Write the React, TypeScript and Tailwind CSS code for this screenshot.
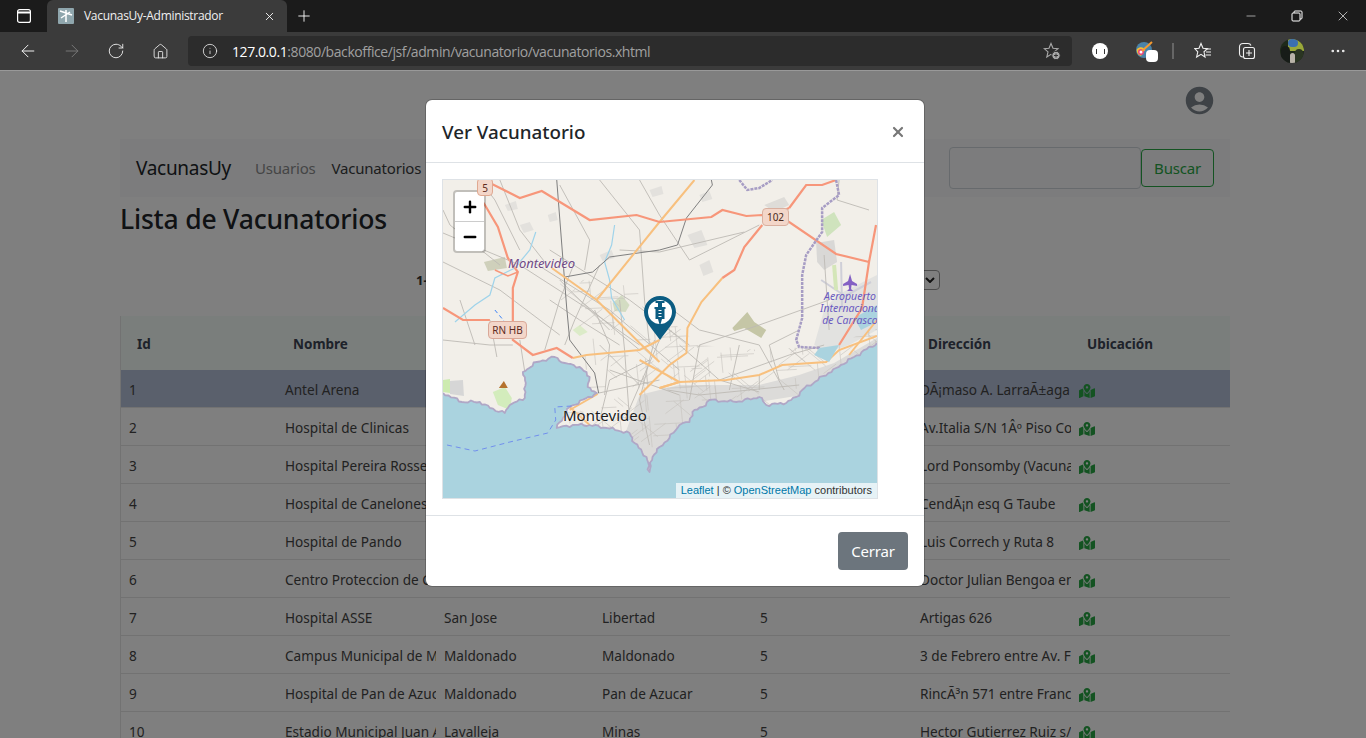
import React from "react";
import { FaMapMarkedAlt } from "react-icons/fa";
import { MdAccountCircle } from "react-icons/md";
import { ArrowLeft, ArrowRight, RotateCw, Home, Info, Plus, X, Minus, MoreHorizontal } from "lucide-react";

const rows = [
  ["1", "Antel Arena", "Montevideo", "Montevideo", "5", "DÃ¡maso A. LarraÃ±aga"],
  ["2", "Hospital de Clinicas", "Montevideo", "Montevideo", "5", "Av.Italia S/N 1Âº Piso Costado"],
  ["3", "Hospital Pereira Rossell", "Montevideo", "Montevideo", "5", "Lord Ponsomby (Vacunatorio)"],
  ["4", "Hospital de Canelones", "Canelones", "Canelones", "5", "CendÃ¡n esq G Taube"],
  ["5", "Hospital de Pando", "Canelones", "Pando", "5", "Luis Correch y Ruta 8"],
  ["6", "Centro Proteccion de Choferes", "Montevideo", "Montevideo", "5", "Doctor Julian Bengoa entre"],
  ["7", "Hospital ASSE", "San Jose", "Libertad", "5", "Artigas 626"],
  ["8", "Campus Municipal de Maldonado", "Maldonado", "Maldonado", "5", "3 de Febrero entre Av. Franklin"],
  ["9", "Hospital de Pan de Azucar", "Maldonado", "Pan de Azucar", "5", "RincÃ³n 571 entre Francisco"],
  ["10", "Estadio Municipal Juan Antonio", "Lavalleja", "Minas", "5", "Hector Gutierrez Ruiz s/n"],
];

const grayRoads = [
  "M443 233L520 265L590 310L640 345", "M443 262L500 290L560 335", "M530 260L610 310L680 370", "M550 250L630 300L690 345",
  "M500 180L520 230L545 262", "M600 180L640 230L645 300L650 345", "M640 180L660 215L690 260", "M443 340L490 345L513 345",
  "M460 300L475 345", "M490 320L497 357", "M520 340L525 372", "M545 350L560 300L575 262", "M595 310L610 345L605 395",
  "M620 300L625 350L630 420", "M655 340L640 400L650 445", "M680 345L720 380L760 392", "M660 300L700 330L760 345L785 390",
  "M690 260L760 225", "M660 252L745 232", "M700 345L760 325L830 300", "M620 250L660 252", "M720 380L790 355L825 345",
  "M668 390L700 395L800 385", "M610 370L680 395", "M590 395L660 380", "M600 345L640 385", "M580 300L640 350", "M660 340L625 420",
  "M600 420L610 380L650 360", "M700 345L690 400", "M730 390L740 345", "M780 380L770 345L800 330", "M760 390L760 375",
  "M840 180L838 200L870 210", "M825 255L830 330", "M600 265L575 320L565 345", "M550 300L580 320L620 345", "M560 280L610 330",
  "M443 210L450 225L500 265", "M560 185L590 240L585 270", "M480 180L495 200L520 250",
];

const coastPts: [number, number][] = [
  [443, 393], [462, 402], [480, 402], [490, 408], [505, 413], [510, 405], [525, 398], [526, 383], [523, 372], [537, 362], [555, 357],
  [565, 363], [580, 367], [590, 377], [588, 387], [597, 393], [570, 407], [557, 428], [573, 425], [590, 425], [607, 428], [630, 433],
  [635, 443], [647, 457], [650, 472], [653, 457], [660, 447], [670, 438], [680, 425], [690, 422], [693, 412], [703, 407], [710, 400],
  [737, 402], [760, 397], [767, 405], [787, 403], [797, 397], [803, 390], [837, 368], [878, 343],
];

function bumpy(pts: [number, number][], amp: number) {
  let d = `M${pts[0][0]} ${pts[0][1]}`;
  let n = 0;
  for (let s = 1; s < pts.length; s++) {
    const [x0, y0] = pts[s - 1];
    const [x1, y1] = pts[s];
    const len = Math.hypot(x1 - x0, y1 - y0);
    const steps = Math.max(1, Math.round(len / 3));
    for (let i = 1; i <= steps; i++) {
      n += 1;
      const t = i / steps;
      const a = i === steps ? 0 : amp * Math.sin(n * 1.7) * Math.cos(n * 0.63);
      const px = x0 + (x1 - x0) * t - ((y1 - y0) / len) * a;
      const py = y0 + (y1 - y0) * t + ((x1 - x0) / len) * a;
      d += `L${px.toFixed(1)} ${py.toFixed(1)}`;
    }
  }
  return d;
}

const coastLine = bumpy(coastPts, 1.6);

function hash(n: number) {
  const v = Math.sin(n * 12.9898) * 43758.5453;
  return v - Math.floor(v);
}

const angles: [number, number][] = [[0.77, 0.64], [0.8, -0.6], [0.1, 1], [1, -0.05]];
const cityStreets: string[] = [];
for (let i = 0; i < 300; i++) {
  const x = 555 + hash(i) * 323;
  const y = 280 + hash(i + 1000) * 170;
  const [dx, dy] = angles[Math.floor(hash(i + 2000) * 4)];
  const len = 8 + hash(i + 3000) * 26;
  cityStreets.push(`M${x.toFixed(1)} ${y.toFixed(1)}L${(x + dx * len).toFixed(1)} ${(y + dy * len).toFixed(1)}`);
}

function MapArt() {
  return (
    <svg viewBox="443 180 435 318" className="block w-full h-full" preserveAspectRatio="none">
      <defs>
        <clipPath id="city">
          <path d="M548 278L625 282L700 345L760 350L840 345L878 325L878 450L640 480L560 430L585 340Z" />
        </clipPath>
      </defs>
      <rect x="443" y="180" width="435" height="318" fill="#f2efe9" />
      {/* urban fill */}
      <path d="M640 395L680 385L760 385L800 375L835 363L878 338L878 350L803 395L760 402L710 405L680 430L650 475L625 435Z" fill="#dcdbd9" />
      {/* patches */}
      <path d="M484 262L505 257L507 268L488 271Z" fill="#cfd0bb" />
      <path d="M733 328L748 312L755 322L767 330L762 338L745 328L735 331Z" fill="#c5c6a6" />
      <path d="M613 303L622 295L630 305L626 312L615 311Z" fill="#d3dcc2" />
      <path d="M573 330L580 325L588 332L580 336Z" fill="#dcebc8" />
      <path d="M493 392L505 387L512 398L510 410L498 405Z" fill="#d3ecbc" />
      <path d="M450 381L463 380L464 396L450 394Z" fill="#d6d6d6" />
      <path d="M443 380L450 379L450 393L443 392Z" fill="#cdebb0" />
      <path d="M822 220L835 212L842 225L828 237Z" fill="#cfe3bd" />
      <path d="M688 235L702 230L708 245L695 248Z" fill="#e2e0dc" />
      <path d="M700 265L710 260L714 272L704 276Z" fill="#e2e0dc" />
      <path d="M765 205L785 197L790 205L775 212Z" fill="#dedcd8" />
      <path d="M817 243L835 240L838 262L825 270L818 262Z" fill="#d9d8d6" />
      <path d="M838 295L878 275L878 330L850 345L830 352L815 345L825 310Z" fill="#e2e2e0" />
      <path d="M855 318L878 305L878 322L862 330Z" fill="#aad3df" />
      <path d="M520 225L530 222L534 230L524 233Z M548 215L556 212L558 220L550 222Z M600 255L612 250L615 258L603 261Z M700 195L710 191L713 199L703 202Z M505 205L516 201L518 209L508 211Z M650 190L662 186L664 194L653 197Z" fill="#e3e1dd" />
      {/* airport */}
      <path d="M846 296L872 282M822 280L846 296M842 262L843 310" stroke="#cfcfd8" strokeWidth="2" fill="none" />
      <path d="M835 265L837 290" stroke="#d4e6b8" strokeWidth="4" fill="none" />
      <g clipPath="url(#city)">
        {cityStreets.map((d, i) => (
          <path key={i} d={d} stroke="#c6c3bd" strokeWidth="0.6" fill="none" />
        ))}
      </g>
      {grayRoads.map((d, i) => (
        <path key={i} d={d} stroke="#bdbab4" strokeWidth="0.9" fill="none" />
      ))}
      {/* streams */}
      <path d="M536 232L530 250L515 268L495 278L490 295L475 305L455 322M615 225L612 245L605 262L610 280L612 298L625 320" stroke="#9fd3ea" strokeWidth="1.2" fill="none" />
      <path d="M495 310L505 322L520 330" stroke="#3b82f6" strokeWidth="1" strokeDasharray="4 3" fill="none" />
      {/* rails */}
      <path d="M557 180L567 308L570 340L595 373L599 393" stroke="#7d7d7d" strokeWidth="1" fill="none" />
      <path d="M565 277L593 272L610 257L660 250L678 245L687 218L713 185L712 180" stroke="#808080" strokeWidth="1" fill="none" />
      {/* orange roads */}
      <g stroke="#f8c07e" strokeWidth="2" fill="none">
        <path d="M695 180L660 222L597 300M552 268L597 300L640 343L660 362" />
        <path d="M573 358L587 355L640 350L660 340" />
        <path d="M660 388L680 382L727 380L760 375L783 365L827 362L840 350L878 336" />
        <path d="M723 278L702 302L688 328L687 353L670 365L640 395" />
        <path d="M660 388L680 382L640 360" />
        <path d="M590 425L570 407M570 410L598 394" />
        <path d="M850 355L878 320" />
      </g>
      {/* trunk */}
      <g stroke="#f7967a" strokeWidth="2.2" fill="none">
        <path d="M484 180L520 198L542 191L590 220L637 215L660 222L712 217L723 210L747 216L763 215L790 222L837 254L870 262L877 225" />
        <path d="M870 262L863 308L840 345" />
        <path d="M763 225L745 247L735 270L723 278" />
        <path d="M790 208L807 185L823 185L837 180" />
        <path d="M771 216L790 208" />
        <path d="M478 195L485 205L498 227L508 258L518 272L513 288L513 322L513 340L533 355L557 348L573 358" />
        <path d="M443 308L463 320L490 320" />
        <path d="M518 272L508 276L495 270" strokeWidth="1.5" />
      </g>
      {/* admin boundary */}
      <path d="M740 180L748 190L760 188L773 180M837 180L840 195L823 208L823 232L807 255L803 275L803 318L797 340L800 347L820 348L830 360" stroke="#a79dc4" strokeWidth="2.5" fill="none" strokeDasharray="3 1" />
      {/* water */}
      <path d={`${coastLine}L878 498L443 498Z`} fill="#aad3df" />
      <path d={coastLine} fill="none" stroke="#b0a7c6" strokeWidth="1.8" strokeLinejoin="round" />
      <path d="M820 348L840 345L830 362L815 355Z" fill="#aad3df" />
      <path d="M447 445L475 451L510 442L548 433L556 420L555 407L572 406" stroke="#6a87ee" strokeWidth="0.9" strokeDasharray="5 4" fill="none" />
      {/* peak */}
      <path d="M504 381L508 388L499 388Z" fill="#b5722e" />
      {/* plane */}
      <path d="M851 274L853 281L858 284L858 286L852.5 285L852 289L854 291L848 291L850 289L849.5 285L844 286L844 284L849 281Z" fill="#8461c4" />
    </svg>
  );
}

function Pin() {
  return (
    <svg viewBox="0 0 32 44" className="w-8 h-11">
      <path d="M16 0C7 0 0 7 0 16C0 26 11 36 16 44C21 36 32 26 32 16C32 7 25 0 16 0Z" fill="#0b5c82" />
      <circle cx="16" cy="16" r="12" fill="#fff" />
      <path d="M11.5 5H20.5V7H18V11H21.5V13H20.5V23H18L16.6 28H15.4L14 23H11.5V13H10.5V11H14V7H11.5Z" fill="#0b5c82" />
      <path d="M14.5 14.5H17.5M14.5 17.5H17.5M14.5 20.5H17.5" stroke="#fff" strokeWidth="1.2" />
    </svg>
  );
}

const tableCols = "grid-cols-[156px_159px_158px_158px_160px_159px_1fr]";

export default function App() {
  return (
    <div className="w-[1366px] h-[738px] overflow-hidden flex flex-col font-['Noto_Sans','Open_Sans',sans-serif] bg-white">
      {/* Browser tab strip */}
      <div className="h-8 bg-[#1b1b1b] flex items-end shrink-0 text-white">
        <div className="w-[47px] h-8 flex items-center justify-center">
          <svg width="16" height="16" viewBox="0 0 16 16" fill="none" stroke="#fff" strokeWidth="1.2"><rect x="1.6" y="1.6" width="12.8" height="12.8" rx="2" /><path d="M1.6 4.5H14.4" strokeWidth="2" /></svg>
        </div>
        <div className="w-[240px] h-[32px] bg-[#3b3b3b] rounded-t-md flex items-center pl-[11px] pr-[11px]">
          <svg width="16" height="16" viewBox="0 0 16 16" className="mr-[10px] shrink-0"><rect width="16" height="16" rx="1" fill="#8fa6ad" /><path d="M2 3L14 7M8 2V14M3 10L12 4" stroke="#fff" strokeWidth="1.5" /></svg>
          <span className="text-[12px] text-[#f0f0f0] font-['Open_Sans',sans-serif] whitespace-nowrap flex-1 tracking-[-0.3px]">VacunasUy-Administrador</span>
          <X size={13} strokeWidth={1.6} />
        </div>
        <div className="w-[34px] h-8 flex items-center justify-center"><Plus size={18} strokeWidth={1.2} /></div>
        <div className="flex-1" />
        <div className="w-[46px] h-8 flex items-center justify-center"><Minus size={14} strokeWidth={1} /></div>
        <div className="w-[46px] h-8 flex items-center justify-center">
          <svg width="12" height="12" viewBox="0 0 12 12" fill="none" stroke="#fff" strokeWidth="1"><rect x="1" y="3" width="8" height="8" rx="1" /><path d="M3 3V2a1 1 0 0 1 1-1h6a1 1 0 0 1 1 1v6a1 1 0 0 1-1 1H9" /></svg>
        </div>
        <div className="w-[46px] h-8 flex items-center justify-center"><X size={16} strokeWidth={1} /></div>
      </div>
      {/* Browser toolbar */}
      <div className="h-[38px] bg-[#3b3b3b] flex items-center shrink-0 text-[#f0f0f0] relative">
        <div className="w-11 flex justify-center pl-[11px]"><ArrowLeft size={20} strokeWidth={1.2} /></div>
        <div className="w-11 flex justify-center pl-[12px] text-[#777]"><ArrowRight size={20} strokeWidth={1.2} /></div>
        <div className="w-11 flex justify-center pl-[12px]"><RotateCw size={18} strokeWidth={1.2} /></div>
        <div className="w-11 flex justify-center pl-[12px]"><Home size={17} strokeWidth={1.2} /></div>
        <div className="ml-[12px] w-[884px] h-[30px] rounded bg-[#2c2c2c] flex items-center pl-[14px] pr-[11px]">
          <Info size={16} strokeWidth={1.2} className="mr-[14px] shrink-0" />
          <span className="text-[14px] font-['Open_Sans',sans-serif] tracking-[-0.42px] whitespace-nowrap flex-1"><span className="text-white font-medium">127.0.0.1</span><span className="text-[#a0a0a0]">:8080/backoffice/jsf/admin/vacunatorio/vacunatorios.xhtml</span></span>
          <svg width="18" height="18" viewBox="0 0 18 18" fill="none" stroke="#a8a8a8" strokeWidth="1.1"><path d="M8 1.5L10 6.2L15 6.6L11.2 9.9L12.3 15L8 12.3L3.8 15L5 9.9L1.2 6.6L6 6.2Z" /><circle cx="13" cy="13.5" r="4.2" fill="#a8a8a8" stroke="#2c2c2c" strokeWidth="1" /><path d="M13 11.5V15.5M11 13.5H15" stroke="#333" strokeWidth="1" /></svg>
        </div>
        <div className="ml-[20px] w-4 h-4 rounded-full bg-white flex items-center justify-center">
          <div className="w-[9px] h-[5px] border-x border-[#333] border-dashed" />
        </div>
        <div className="ml-[28px] relative w-[20px] h-[20px]">
          <svg width="18" height="18" viewBox="0 0 18 18"><circle cx="8" cy="9" r="8" fill="#4b83a8" /><path d="M1 8C4 5 8 6 9 9L5 15C2 14 0 11 1 8Z" fill="#f2c230" /><circle cx="5" cy="11" r="3" fill="#e8457a" /><circle cx="5" cy="11" r="1.5" fill="#fff" /><path d="M6 10L16 1" stroke="#f59a30" strokeWidth="2" /></svg>
          <div className="absolute left-[10px] top-[9px] w-3 h-3 rounded-sm bg-white" />
        </div>
        <div className="ml-[16px] w-[2px] h-4 bg-[#666]" />
        <div className="ml-[20px]">
          <svg width="18" height="18" viewBox="0 0 18 18" fill="none" stroke="#f0f0f0" strokeWidth="1.1"><path d="M7 1.5L9 6.3L13.5 6.6L10 9.8L11 15L7 12.3L2.6 15L3.8 9.8L0.8 6.6L5 6.3Z" /><path d="M11.5 7H17M12 10H17M11.5 13H17" /></svg>
        </div>
        <div className="ml-[26px]">
          <svg width="18" height="18" viewBox="0 0 18 18" fill="none" stroke="#f0f0f0" strokeWidth="1.1"><path d="M5 15C3 15 1.5 13.5 1.5 11.5V5C1.5 3 3 1.5 5 1.5H10C11.5 1.5 12.5 2.3 13 3.5" /><rect x="5.5" y="5.5" width="11" height="11" rx="2" /><path d="M11 8V14M8 11H14" /></svg>
        </div>
        <div className="ml-[24px] w-6 h-6 rounded-full overflow-hidden relative bg-[#1e2a1a]">
          <div className="absolute right-0 top-0 w-4 h-3 bg-[#9aa83a]" />
          <div className="absolute left-[8px] top-0 w-[10px] h-[8px] bg-[#3c6fb0] rounded-full" />
          <div className="absolute left-[1px] top-[7px] w-[9px] h-[17px] rounded-t-full bg-[#171c18]" />
          <div className="absolute left-[10px] top-[14px] w-[5px] h-[10px] rounded-t-full bg-[#b9b3a8]" />
          <div className="absolute right-[1px] top-[10px] w-[8px] h-[14px] rounded-t-full bg-[#2a3522]" />
        </div>
        <div className="ml-[25px]"><MoreHorizontal size={18} strokeWidth={1.5} /></div>
      </div>

      {/* Page */}
      <main className="relative flex-1 overflow-hidden bg-white border-t border-[#999]">
        <div className="flex justify-end pr-[150px] pt-[13px] text-[#7c858d] h-[68px]">
          <MdAccountCircle size={33} />
        </div>
        <div className="mx-[120px] w-[1110px]">
          <nav className="h-[58px] bg-[#f8f9fa] flex items-center pl-4 pr-4">
            <span className="text-[19px] text-[#212529] mr-6 tracking-[-0.3px]">VacunasUy</span>
            <span className="text-[15px] text-[#8a8b8c] mr-4 tracking-[-0.2px]">Usuarios</span>
            <span className="text-[15px] text-[#3a3c3e] tracking-[-0.2px]">Vacunatorios</span>
            <div className="flex-1" />
            <div className="w-[192px] h-[42px] border border-[#ced4da] rounded bg-[#f8f9fa]" />
            <button className="w-[73px] h-[38px] border border-[#28a745] rounded text-[#28a745] text-[15px] tracking-[-0.2px]">Buscar</button>
          </nav>
          <h1 className="text-[26.5px] leading-[34px] font-medium text-[#212529] mt-[5px] tracking-[-0.2px]">Lista de Vacunatorios</h1>
          <div className="h-[80px] relative">
            <span className="absolute left-[296px] top-[35px] text-[13px] font-bold text-[#333]">1-10</span>
            <div className="absolute left-[800px] top-[34px] w-5 h-5 border border-[#999] rounded-sm flex items-center justify-center text-[#222]">
              <svg width="10" height="6" viewBox="0 0 10 6" fill="none" stroke="currentColor" strokeWidth="2"><path d="M1 1L5 5L9 1" /></svg>
            </div>
          </div>
          <div className={`grid ${tableCols} h-[54px] pt-[2px] bg-[#f5fcf8] border-l border-[#e5e5e5] items-center text-[13.5px] font-bold text-[#3c4555]`}>
            {["Id", "Nombre", "Departamento", "Localidad", "Cupos", "Dirección", "Ubicación"].map((h) => (
              <div key={h} className="pl-4">{h}</div>
            ))}
          </div>
          {rows.map((r, i) => (
            <div key={r[0]} className={`grid ${tableCols} h-[38px] pt-[4px] items-center text-[13.6px] text-[#444] border-b border-l border-[#e5e5e5] ${i === 0 ? "bg-[#b4c0d8]" : ""}`}>
              {r.map((c, j) => (
                <div key={j} className="pl-2 overflow-hidden whitespace-nowrap">{c}</div>
              ))}
              <div className="pl-2 text-[#28a745]"><FaMapMarkedAlt size={16} /></div>
            </div>
          ))}
        </div>

        {/* Backdrop */}
        <div className="absolute inset-0 bg-black/50" />

        {/* Modal */}
        <div className="absolute left-[426px] top-[29px] w-[498px] h-[486px] bg-white shadow-[0_0_0_1px_rgba(0,0,0,0.2)] rounded-md flex flex-col">
          <div className="h-[63px] pt-[2px] border-b border-[#dee2e6] flex items-center justify-between pl-4 pr-[18px]">
            <span className="text-[18.8px] font-medium text-[#212529]">Ver Vacunatorio</span>
            <X size={16} strokeWidth={3.2} className="text-[#777]" />
          </div>
          <div className="h-[353px] pl-4 pt-4 border-b border-[#dee2e6]">
            <div className="relative w-[436px] h-[320px] border border-[#dee2e6] overflow-hidden">
              <MapArt />
              <div className="absolute left-[10px] top-[10px] w-[33px] rounded border-2 border-black/20 bg-white bg-clip-padding flex flex-col">
                <div className="h-[30px] border-b border-[#ccc] flex items-center justify-center"><Plus size={18} strokeWidth={3.2} className="text-black" /></div>
                <div className="h-[29px] flex items-center justify-center"><Minus size={18} strokeWidth={3.2} className="text-black" /></div>
              </div>
              <span className="absolute left-[34px] top-[-2px] h-[18px] w-[16px] bg-[#f3d6c9] border border-[#e0a890] rounded-sm text-[10px] text-[#5c2a1e] text-center leading-[18px]">5</span>
              <span className="absolute left-[319px] top-[28px] h-[18px] w-[27px] bg-[#f3d6c9] border border-[#d9b0a0] rounded-sm text-[10px] text-[#4a2a20] text-center leading-[16px]">102</span>
              <span className="absolute left-[45px] top-[141px] h-[18px] w-[39px] bg-[#f3d6c9] border border-[#d9a898] rounded-sm text-[10px] text-[#5c2a1e] text-center leading-[16px]">RN HB</span>
              <span className="absolute left-[65px] top-[75px] text-[13px] italic text-[#6f4a86] leading-4 [text-shadow:0_0_2px_#fff]">Montevideo</span>
              <span className="absolute left-[120px] top-[225px] text-[15px] text-[#1a1a1a] leading-5 [text-shadow:0_0_3px_#fff]">Montevideo</span>
              <span className="absolute left-[377px] top-[110px] w-[60px] text-[10.5px] italic text-[#6a5ac0] leading-[12px] text-center whitespace-nowrap">Aeropuerto<br />Internacional<br />de Carrasco</span>
              <div className="absolute left-[201px] top-[116px]"><Pin /></div>
              <div className="absolute right-0 bottom-0 h-[15px] bg-white/70 pl-[5px] pr-[5px] text-[11px] leading-[15px] font-['Liberation_Sans',sans-serif] text-[#333] whitespace-nowrap">
                <span className="text-[#0078a8]">Leaflet</span> | © <span className="text-[#0078a8]">OpenStreetMap</span> contributors
              </div>
            </div>
          </div>
          <div className="flex-1 flex items-center justify-end pr-4">
            <button className="w-[70px] h-[38px] rounded bg-[#6c757d] text-white text-[15px] tracking-[-0.2px]">Cerrar</button>
          </div>
        </div>
      </main>
    </div>
  );
}
